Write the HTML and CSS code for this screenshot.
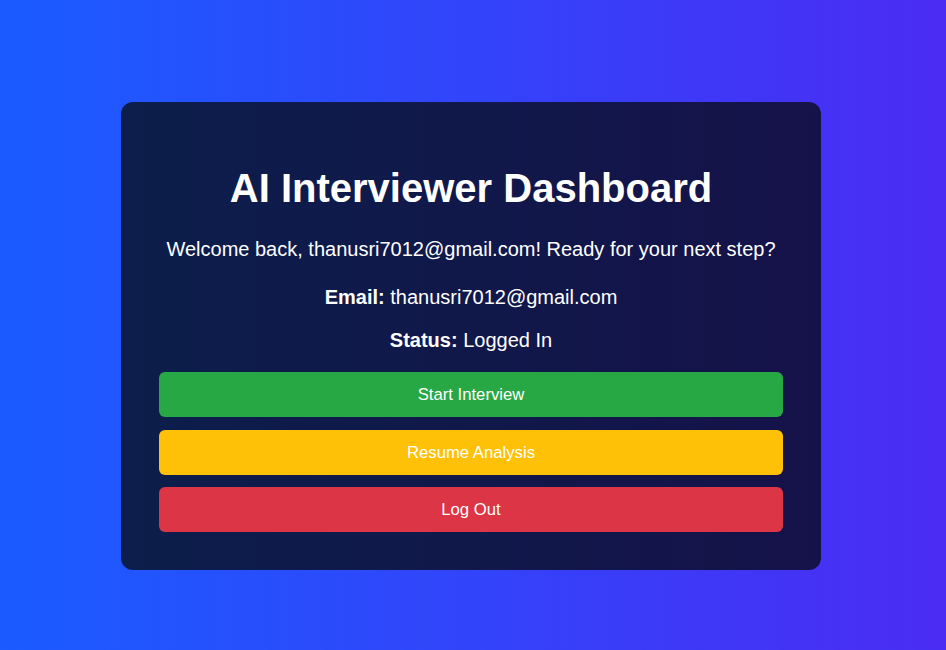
FILE: index.html
```html
<!DOCTYPE html>
<html lang="en">
<head>
<meta charset="utf-8">
<title>AI Interviewer Dashboard</title>
<link rel="stylesheet" href="styles.css">
</head>
<body>
  <main class="card">
    <h1 class="title">AI Interviewer Dashboard</h1>
    <p class="welcome">Welcome back, thanusri7012@gmail.com! Ready for your next step?</p>
    <p class="info"><strong>Email:</strong> thanusri7012@gmail.com</p>
    <p class="info status"><strong>Status:</strong> Logged In</p>
    <div class="actions">
      <button class="btn btn-green">Start Interview</button>
      <button class="btn btn-yellow">Resume Analysis</button>
      <button class="btn btn-red">Log Out</button>
    </div>
  </main>
</body>
</html>
```
FILE: styles.css
```css
* { box-sizing: border-box; }
html, body { height: 100%; }
body {
  margin: 0;
  font-family: "Liberation Sans", Arial, sans-serif;
  background: linear-gradient(to right, #1a5cff, #4b2cf3);
  display: flex;
  justify-content: center;
  align-items: flex-start;
  padding: 102px 4px 0 0;
}
.card {
  width: 700px;
  padding: 38px 38px 38px 38px;
  border-radius: 12px;
  background: linear-gradient(to right, #0c1e4b, #151249);
  color: #ffffff;
  text-align: center;
}
.title {
  margin: 25px 0 0;
  font-size: 40px;
  line-height: 46px;
  font-weight: bold;
}
.welcome {
  margin: 27px 0 0;
  font-size: 20px;
  line-height: 23px;
}
.info {
  margin: 25px 0 0;
  font-size: 20px;
  line-height: 23px;
}
.status { margin-top: 20px; }
.actions {
  margin-top: 20px;
  display: flex;
  flex-direction: column;
  gap: 12.5px;
}
.btn {
  display: block;
  width: 100%;
  height: 45px;
  border: none;
  border-radius: 6px;
  padding: 0;
  font-family: "Liberation Sans", Arial, sans-serif;
  font-size: 16.7px;
  line-height: 45px;
  color: #ffffff;
  cursor: pointer;
}
.btn-green { background: #28a745; }
.btn-yellow { background: #ffc107; }
.btn-red { background: #dc3545; }
```
